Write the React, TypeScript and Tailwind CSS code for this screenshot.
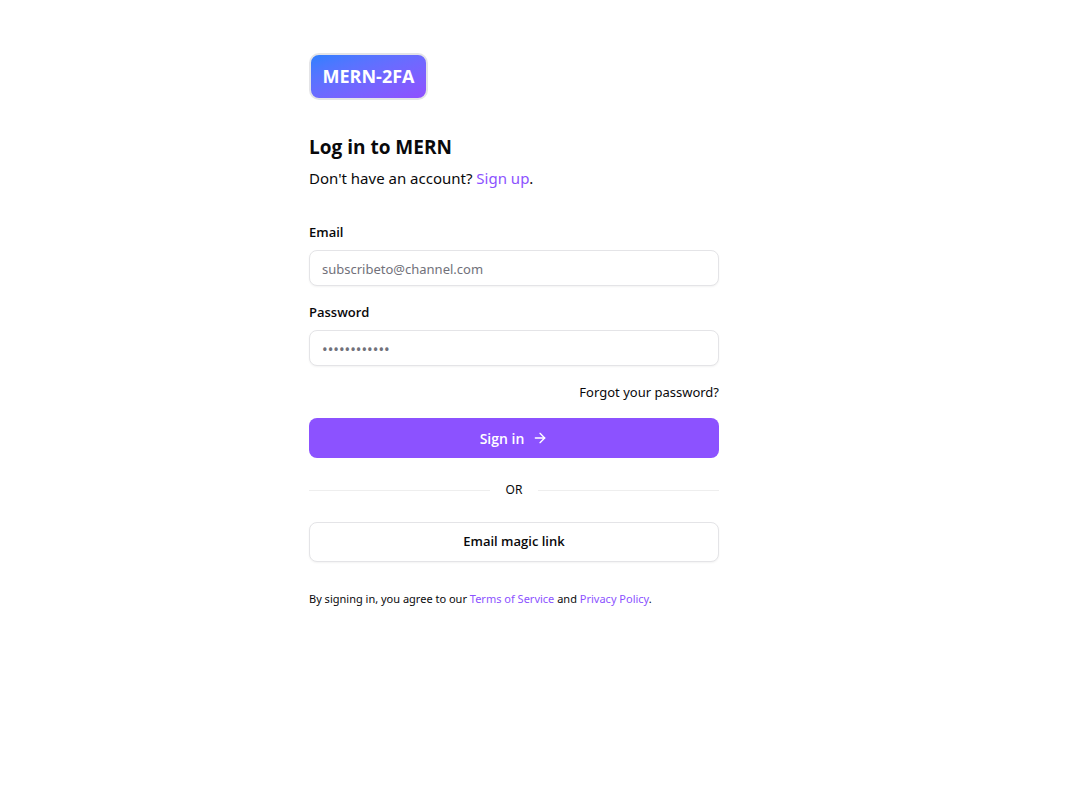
import { ArrowRight } from "lucide-react";

const field =
  "h-9 w-full rounded-lg border border-[#e4e4e7] bg-white px-3 text-[#09090b] shadow-xs outline-none placeholder:text-[#71717a] focus:border-[#8c52ff]";

const strong = "font-['Open_Sans','Noto_Sans',sans-serif]";

export default function App() {
  return (
    <main className="min-h-screen bg-white px-4 pt-[53px] font-['Noto_Sans','Open_Sans',sans-serif] text-[#09090b] sm:pr-[63px]">
      <div className="mx-auto flex w-full max-w-[410px] flex-col">
        <a
          href="#home"
          className={`flex h-[47px] w-[119px] items-center justify-center rounded-[10px] border-2 border-[#e4e4e7] bg-linear-to-br from-[#2b7fff] to-[#8f4fff] text-[18px] font-bold whitespace-nowrap text-white ${strong}`}
        >
          MERN-2FA
        </a>

        <h1 className={`mt-8 text-[19px] leading-[30px] font-bold ${strong}`}>Log in to MERN</h1>
        <p className="text-[15px] leading-8">
          Don't have an account?{" "}
          <a href="#signup" className="text-[#8c52ff]">
            Sign up
          </a>
          .
        </p>

        <form className="mt-7" onSubmit={(event) => event.preventDefault()}>
          <div>
            <label htmlFor="email" className={`block text-[13px] leading-5 font-semibold ${strong}`}>
              Email
            </label>
            <input
              id="email"
              type="email"
              placeholder="subscribeto@channel.com"
              className={`mt-2 pt-px text-[13px] ${field}`}
            />
          </div>
          <div className="mt-4">
            <label htmlFor="password" className={`block text-[13px] leading-5 font-semibold ${strong}`}>
              Password
            </label>
            <input
              id="password"
              type="password"
              placeholder="••••••••••••"
              className={`mt-2 pt-px text-[15px] ${field}`}
            />
          </div>
          <div className="mt-4 flex justify-end">
            <a href="#forgot-password" className="text-[13px] leading-5">
              Forgot your password?
            </a>
          </div>
          <button
            type="submit"
            className={`mt-4 flex h-10 w-full items-center justify-center gap-2 rounded-lg bg-[#8c52ff] text-[14px] font-semibold text-white ${strong}`}
          >
            Sign in
            <ArrowRight size={16} />
          </button>
          <div className="my-6 flex h-4 items-center gap-4">
            <div className="h-px flex-1 bg-[#eeeeee]" />
            <span className="text-[12px] leading-4">OR</span>
            <div className="h-px flex-1 bg-[#eeeeee]" />
          </div>
          <button
            type="button"
            className={`h-10 w-full rounded-lg border border-[#e4e4e7] bg-white text-[13px] font-semibold shadow-xs ${strong}`}
          >
            Email magic link
          </button>
        </form>

        <p className="mt-7 text-[11px] leading-[18px]">
          By signing in, you agree to our{" "}
          <a href="#terms" className="text-[#8c52ff]">
            Terms of Service
          </a>{" "}
          and{" "}
          <a href="#privacy" className="text-[#8c52ff]">
            Privacy Policy
          </a>
          .
        </p>
      </div>
    </main>
  );
}
